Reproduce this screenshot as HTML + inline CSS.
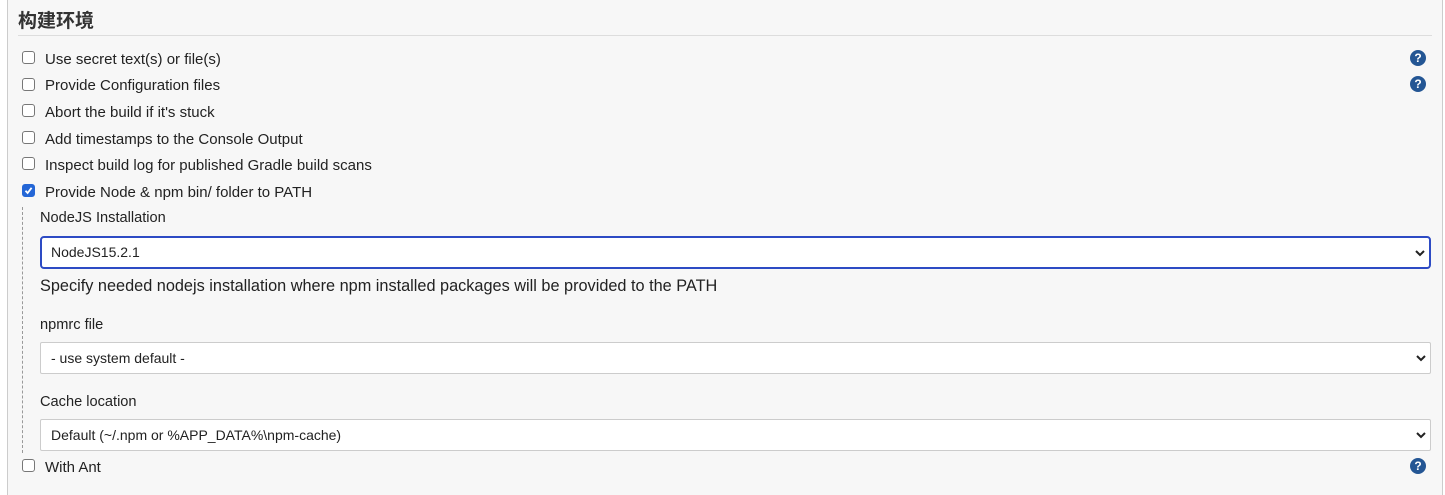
<!DOCTYPE html>
<html><head><meta charset="utf-8"><style>
body{margin:0;width:1445px;height:495px;background:#fff;font-family:"Liberation Sans","Noto Sans CJK SC",sans-serif;color:#333;overflow:hidden;position:relative}
.panel{position:absolute;left:7px;top:0;width:1434px;height:495px;background:#f7f7f7;border-left:1px solid #ccc;border-right:1px solid #ccc}
h1{position:absolute;left:18px;top:6px;margin:0;font-size:19px;font-weight:bold;color:#333}
.hr{position:absolute;left:18px;top:35px;width:1414px;height:1px;background:#ddd}
.cb{position:absolute;left:22px;width:11px;height:11px;border:1px solid #777;border-radius:3px;background:#fff}
.cb.on{background:#2466d6;border-color:#2466d6}
.lbl{position:absolute;left:45px;font-size:15px;line-height:16px;color:#222;margin-top:1px}
.help{position:absolute;left:1410px;width:16px;height:16px;border-radius:50%;background:#245694;color:#fff;font-size:12px;font-weight:bold;text-align:center;line-height:16px}
.dash{position:absolute;left:22px;top:207px;height:246px;border-left:1px dashed #999}
.fl{position:absolute;left:40px;font-size:14.6px;color:#222;margin-top:1px}
.sel{position:absolute;left:40px;width:1391px;background:#fff;border:1px solid #ccc;border-radius:2px;box-sizing:border-box;font-size:14px;color:#222;padding-left:10px}
.sel svg{position:absolute;right:4px;top:50%;margin-top:-4px}
</style></head><body>
<div class="panel"></div>
<h1>构建环境</h1>
<div class="hr"></div>

<div class="cb" style="top:51px"></div><div class="lbl" style="top:51px">Use secret text(s) or file(s)</div>
<div class="cb" style="top:78px"></div><div class="lbl" style="top:77px">Provide Configuration files</div>
<div class="cb" style="top:104px"></div><div class="lbl" style="top:104px">Abort the build if it's stuck</div>
<div class="cb" style="top:131px"></div><div class="lbl" style="top:131px">Add timestamps to the Console Output</div>
<div class="cb" style="top:157px"></div><div class="lbl" style="top:157px">Inspect build log for published Gradle build scans</div>
<div class="cb on" style="top:184px"><svg width="11" height="11" style="position:absolute;left:0;top:0"><path d="M2.5 5.8 L4.6 8 L8.6 2.8" stroke="#fff" stroke-width="1.8" fill="none"/></svg></div><div class="lbl" style="top:184px">Provide Node &amp; npm bin/ folder to PATH</div>

<div class="help" style="top:50px">?</div>
<div class="help" style="top:76px">?</div>
<div class="help" style="top:458px">?</div>

<div class="dash"></div>
<div class="fl" style="top:209px">NodeJS Installation</div>
<div class="sel" style="top:236px;height:33px;line-height:29px;border:2px solid #2d4bc4;border-radius:4px;padding-left:9px">NodeJS15.2.1<svg width="10" height="8"><path d="M1 2 L5 6 L9 2" stroke="#222" stroke-width="2" fill="none"/></svg></div>
<div class="fl" style="top:276px;font-size:16.3px">Specify needed nodejs installation where npm installed packages will be provided to the PATH</div>
<div class="fl" style="top:316px">npmrc file</div>
<div class="sel" style="top:342px;height:32px;line-height:30px">- use system default -<svg width="10" height="8"><path d="M1 2 L5 6 L9 2" stroke="#222" stroke-width="2" fill="none"/></svg></div>
<div class="fl" style="top:393px">Cache location</div>
<div class="sel" style="top:419px;height:32px;line-height:30px">Default (~/.npm or %APP_DATA%\npm-cache)<svg width="10" height="8"><path d="M1 2 L5 6 L9 2" stroke="#222" stroke-width="2" fill="none"/></svg></div>

<div class="cb" style="top:459px"></div><div class="lbl" style="top:459px">With Ant</div>
</body></html>
